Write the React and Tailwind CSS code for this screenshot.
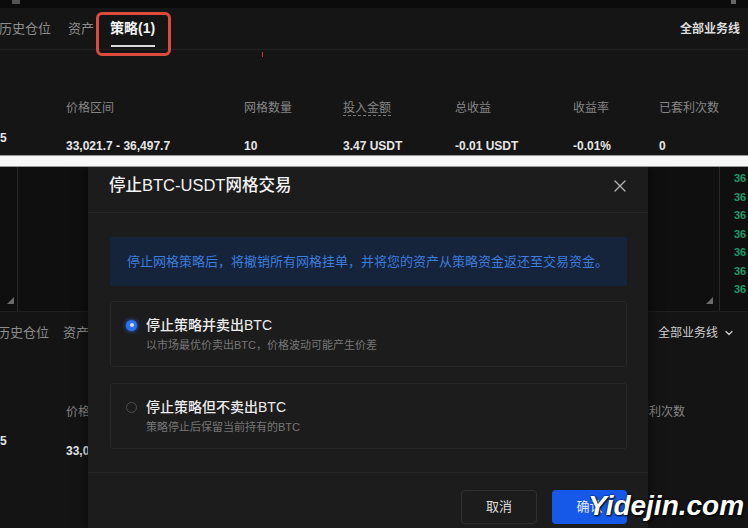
import { X, ChevronDown } from 'lucide-react';

const FONT = "font-['Liberation_Sans','Noto_Sans_CJK_SC',sans-serif]";

const GREEN_ROWS = [0, 1, 2, 3, 4, 5, 6];

function Triangle() {
  return (
    <svg width="7" height="7" viewBox="0 0 7 7">
      <path d="M7 0 L7 7 L0 7 Z" fill="#6b6b6b" />
    </svg>
  );
}

function TopPanel() {
  return (
    <div className="relative h-[155px] overflow-hidden bg-[#151515]">
      <div className="flex h-[8px] items-start justify-between bg-[#0b0b0b] px-[12px]">
        <div className="h-[4px] w-[8px] bg-[#555]" />
        <div className="h-[4px] w-[5px] bg-[#666]" />
      </div>
      <div className="flex h-[42px] items-center border-b border-[#232323]">
        <span className="ml-[-1px] text-[13px] text-[#8d8d8d]">历史仓位</span>
        <span className="ml-[17px] text-[13px] text-[#8d8d8d]">资产</span>
        <div className="relative ml-[16px] flex h-full flex-col items-center justify-center">
          <span className="text-[14px] font-bold text-[#f2f2f2]">策略(1)</span>
          <div className="absolute bottom-[2px] h-[2px] w-[44px] bg-[#d8d8d8]" />
        </div>
        <span className="ml-auto mr-[8px] text-[12px] font-bold text-[#dcdcdc]">全部业务线</span>
      </div>
      <div className="absolute left-[96px] top-[12px] h-[44px] w-[75px] rounded-[6px] border-[3px] border-[#dd4b3f]" />
      <div className="absolute left-[262px] top-[52px] h-[5px] w-[1px] bg-[#c0392b]" />

      <div className="mt-[48px] flex h-[20px] items-center text-[12px] text-[#858585]">
        <div className="w-[66px]" />
        <div className="w-[178px]">价格区间</div>
        <div className="w-[99px]">网格数量</div>
        <div className="w-[112px]"><span className="border-b border-dashed border-[#777]">投入金额</span></div>
        <div className="w-[118px]">总收益</div>
        <div className="w-[86px]">收益率</div>
        <div>已套利次数</div>
      </div>
      <div className="mt-[18px] flex h-[20px] items-center text-[12px] font-semibold text-[#e6e6e6]">
        <div className="mb-[16px] w-[66px]">5</div>
        <div className="w-[178px]">33,021.7 - 36,497.7</div>
        <div className="w-[99px]">10</div>
        <div className="w-[112px]">3.47 USDT</div>
        <div className="w-[118px]">-0.01 USDT</div>
        <div className="w-[86px]">-0.01%</div>
        <div>0</div>
      </div>
    </div>
  );
}

function Option({ checked, title, desc }) {
  return (
    <div className="flex h-[66px] items-start rounded-[3px] border border-[#282828] pl-[15px] pt-[15px]">
      <div className="flex h-[16px] w-[20px] items-center">
        {checked ? (
          <div className="flex h-[11px] w-[11px] items-center justify-center rounded-full bg-[#2f6ff2] shadow-[0_0_4px_#2f6ff2]">
            <div className="h-[4px] w-[4px] rounded-full bg-[#cfe0ff]" />
          </div>
        ) : (
          <div className="h-[11px] w-[11px] rounded-full border border-[#4f4f4f]" />
        )}
      </div>
      <div>
        <div className="text-[14px] font-medium leading-[16px] text-[#ececec]">{title}</div>
        <div className="mt-[5px] text-[11px] leading-[14px] text-[#777]">{desc}</div>
      </div>
    </div>
  );
}

function Modal() {
  return (
    <div className="absolute bottom-0 left-[88px] top-0 w-[560px] bg-[#1c1c1c] shadow-[0_0_12px_rgba(0,0,0,0.6)]">
      <div className="flex h-[46px] items-center justify-between border-b border-[#262626] pb-[8px] pl-[21px] pr-[18px]">
        <span className="text-[16.5px] font-medium text-[#f4f4f4]">停止BTC-USDT网格交易</span>
        <X size={20} strokeWidth={1.5} className="text-[#b5b5b5]" />
      </div>
      <div className="px-[22px] pr-[21px]">
        <div className="mt-[24px] flex h-[49px] items-center bg-[#15233b] pl-[17px] text-[13px] text-[#3d7ddd]">
          停止网格策略后，将撤销所有网格挂单，并将您的资产从策略资金返还至交易资金。
        </div>
        <div className="mt-[15px]">
          <Option checked title="停止策略并卖出BTC" desc="以市场最优价卖出BTC，价格波动可能产生价差" />
        </div>
        <div className="mt-[16px]">
          <Option title="停止策略但不卖出BTC" desc="策略停止后保留当前持有的BTC" />
        </div>
      </div>
      <div className="mt-[23px] flex justify-end gap-[15px] border-t border-[#262626] pr-[21px] pt-[17px]">
        <button className="h-[34px] w-[76px] rounded-[4px] border border-[#303030] bg-[#1c1c1c] text-[13px] text-[#dedede]">取消</button>
        <button className="h-[34px] w-[75px] rounded-[4px] bg-[#1659e8] text-[13px] text-[#e8eeff]">确认</button>
      </div>
    </div>
  );
}

function BottomPanel() {
  return (
    <div className="relative h-[361px] overflow-hidden bg-[#141414]">
      <div className="flex h-[145px] border-b border-[#202020] bg-[#0f0f0f]">
        <div className="flex w-[18px] items-end justify-end border-r border-[#2a2a2a] pb-[7px] pr-[3px]">
          <Triangle />
        </div>
        <div className="flex flex-1 items-end justify-end border-r border-[#2a2a2a] pb-[7px] pr-[6px]">
          <Triangle />
        </div>
        <div className="w-[28px] pl-[14px] pt-[3px]">
          {GREEN_ROWS.map((r) => (
            <div key={r} className="h-[18.5px] text-[11px] font-bold text-[#1f9a6b]">36</div>
          ))}
        </div>
      </div>
      <div className="flex h-[42px] items-center text-[13px] text-[#8d8d8d]">
        <span className="ml-[-3px]">历史仓位</span>
        <span className="ml-[14px]">资产</span>
        <span className="ml-auto flex items-center gap-[5px] pr-[13px] text-[12px] text-[#cfcfcf]">
          全部业务线 <ChevronDown size={12} strokeWidth={2.5} />
        </span>
      </div>
      <div className="mt-[48px] flex h-[20px] items-center text-[12px] text-[#858585]">
        <div className="w-[66px]" />
        <div className="w-[559px]">价格区间</div>
        <div>已套利次数</div>
      </div>
      <div className="mt-[19px] flex h-[20px] items-center text-[12px] font-semibold text-[#e6e6e6]">
        <div className="mb-[20px] w-[66px]">5</div>
        <div>33,021.7 - 36,497.7</div>
      </div>
      <Modal />
    </div>
  );
}

export default function App() {
  return (
    <div className={`relative h-[528px] w-[748px] overflow-hidden bg-[#151515] ${FONT}`}>
      <TopPanel />
      <div className="h-[12px] border-y border-[#9a9a9a] bg-[#f7f7f7]" />
      <BottomPanel />
      <div className="absolute left-[588px] top-[489px] text-[28px] font-black italic leading-[34px] text-white [text-shadow:0_0_2px_#000,1px_1px_2px_#000]">
        Yidejin.com
      </div>
    </div>
  );
}
